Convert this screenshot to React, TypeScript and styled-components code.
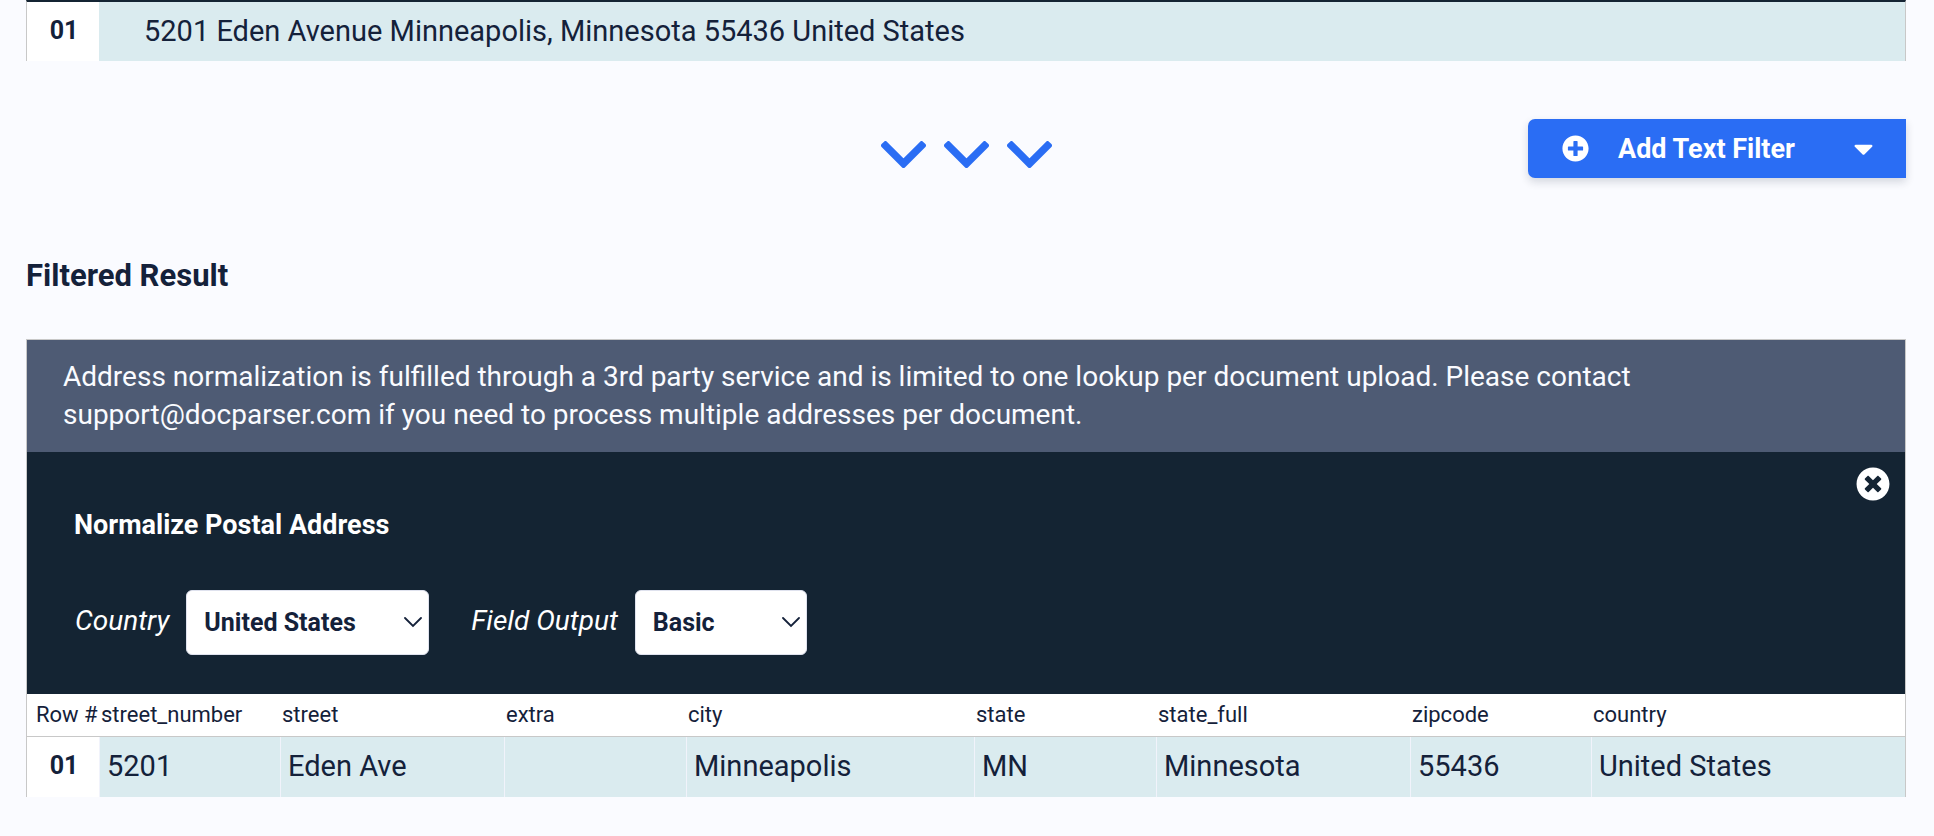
import React from 'react';
import styled, { createGlobalStyle } from 'styled-components';
import { FaCaretDown, FaPlusCircle, FaTimesCircle } from 'react-icons/fa';

const color = {
  page: '#fafbff',
  ink: '#14213a',
  navy: '#142433',
  slate: '#4e5b74',
  blue: '#2a6df4',
  cell: '#daebef',
  line: '#c8c8c8',
  divider: '#f1f3fb',
};

const GlobalStyle = createGlobalStyle`
  *, *::before, *::after { box-sizing: border-box; }
  body {
    margin: 0;
    background: ${color.page};
    color: ${color.ink};
    font-family: Roboto, "Liberation Sans", sans-serif;
  }
`;

const Page = styled.main`
  padding: 0 28px 39px 26px;
`;

const Panel = styled.section<{ $capped?: boolean }>`
  border: 1px solid ${color.line};
  border-bottom: 0;
  ${({ $capped }) => $capped && `border-top: 2px solid ${color.navy};`}
`;

const DataTable = styled.table`
  width: 100%;
  table-layout: fixed;
  border-collapse: separate;
  border-spacing: 0;
  background: #fff;
`;

const Col = styled.col<{ $width?: number }>`
  width: ${({ $width }) => ($width ? `${$width}px` : 'auto')};
`;

const HeadCell = styled.th<{ $first?: boolean }>`
  height: 43px;
  padding: 0 0 0 ${({ $first }) => ($first ? 9 : 2)}px;
  border-bottom: 1px solid ${color.line};
  font-size: 22px;
  font-weight: 400;
  line-height: 26px;
  text-align: left;
  white-space: nowrap;
`;

const RowNumber = styled.th`
  padding: 0 0 2px 2px;
  font-size: 25px;
  font-weight: 700;
  line-height: 30px;
  text-align: center;
`;

const Cell = styled.td`
  height: 60px;
  padding: 0 7px 2px;
  border-left: 1px solid ${color.divider};
  background: ${color.cell};
  font-size: 29px;
  line-height: 34px;
`;

const WideCell = styled(Cell)`
  height: 59px;
  padding: 0 45px 2px;
  border-left: 0;
`;

const FilterBar = styled.div`
  display: grid;
  grid-template-columns: 1fr auto 1fr;
  margin-top: 58px;
`;

const Chevrons = styled.div`
  grid-column: 2;
  display: flex;
  gap: 18px;
  padding-top: 22px;
`;

const AddFilterButton = styled.button`
  grid-column: 3;
  justify-self: end;
  display: flex;
  align-items: center;
  width: 378px;
  height: 59px;
  padding: 0 27px 0 34px;
  border: 0;
  border-radius: 7px 0 0 7px;
  background: ${color.blue};
  box-shadow: 0 4px 8px rgba(20, 33, 58, 0.16);
  color: #fff;
  font: 700 27px/32px Roboto, "Liberation Sans", sans-serif;
  cursor: pointer;
`;

const ButtonLabel = styled.span`
  flex: 1;
  padding-left: 29px;
  text-align: left;
`;

const SectionTitle = styled.h2`
  margin: 80px 0 45px;
  font-size: 31px;
  font-weight: 700;
  line-height: 36px;
`;

const Notice = styled.p`
  margin: 0;
  padding: 18px 36px;
  background: ${color.slate};
  color: ${color.page};
  font-size: 28px;
  line-height: 38px;
`;

const FilterCard = styled.div`
  position: relative;
  padding: 57px 47px 39px;
  background: ${color.navy};
  color: #fff;
`;

const CardTitle = styled.h3`
  margin: 0 0 49px;
  font-size: 27px;
  font-weight: 700;
  line-height: 32px;
`;

const CloseButton = styled.button`
  position: absolute;
  top: 15px;
  right: 15px;
  display: flex;
  padding: 0;
  border: 0;
  background: none;
  color: #fff;
  cursor: pointer;
`;

const Fields = styled.form`
  display: flex;
  flex-wrap: wrap;
  gap: 42px;
  padding-left: 1px;
`;

const Field = styled.div`
  display: flex;
  align-items: center;
  gap: 17px;
`;

const FieldLabel = styled.label`
  padding-bottom: 4px;
  font-size: 28px;
  font-style: italic;
  line-height: 34px;
`;

const SelectBox = styled.div<{ $width: number }>`
  position: relative;
  width: ${({ $width }) => $width}px;
`;

const Select = styled.select`
  appearance: none;
  display: block;
  width: 100%;
  height: 65px;
  padding: 0 36px 0 17px;
  border: 1px solid #dfe2ee;
  border-radius: 6px;
  background: #fff;
  color: ${color.ink};
  font: 700 25px/30px Roboto, "Liberation Sans", sans-serif;
`;

const SelectArrow = styled.svg`
  position: absolute;
  top: 27px;
  right: 7px;
  pointer-events: none;
`;

const Chevron = () => (
  <svg width="45" height="28" viewBox="0 0 45 28" aria-hidden="true">
    <path
      d="M22.5 20.1 L40.55 2.05 L43 4.5 L22.5 25 L2 4.5 L4.45 2.05 Z"
      fill={color.blue}
      stroke={color.blue}
      strokeWidth="4"
      strokeLinejoin="round"
    />
  </svg>
);

type SelectFieldProps = { id: string; label: string; width: number; options: string[] };

const SelectField = ({ id, label, width, options }: SelectFieldProps) => (
  <Field>
    <FieldLabel htmlFor={id}>{label}</FieldLabel>
    <SelectBox $width={width}>
      <Select id={id} defaultValue={options[0]}>
        {options.map((option) => (
          <option key={option}>{option}</option>
        ))}
      </Select>
      <SelectArrow width="18" height="11" viewBox="0 0 18 11" aria-hidden="true">
        <path d="M1 1 L9 9 L17 1" fill="none" stroke={color.ink} strokeWidth="1.8" strokeLinecap="round" />
      </SelectArrow>
    </SelectBox>
  </Field>
);

const columns: { name: string; width?: number; value: string }[] = [
  { name: 'street_number', width: 181, value: '5201' },
  { name: 'street', width: 224, value: 'Eden Ave' },
  { name: 'extra', width: 182, value: '' },
  { name: 'city', width: 288, value: 'Minneapolis' },
  { name: 'state', width: 182, value: 'MN' },
  { name: 'state_full', width: 254, value: 'Minnesota' },
  { name: 'zipcode', width: 181, value: '55436' },
  { name: 'country', value: 'United States' },
];

export default function App() {
  return (
    <>
      <GlobalStyle />
      <Page>
        <Panel $capped>
          <DataTable>
            <colgroup>
              <Col $width={72} />
              <Col />
            </colgroup>
            <tbody>
              <tr>
                <RowNumber scope="row">01</RowNumber>
                <WideCell>5201 Eden Avenue Minneapolis, Minnesota 55436 United States</WideCell>
              </tr>
            </tbody>
          </DataTable>
        </Panel>

        <FilterBar>
          <Chevrons>
            <Chevron />
            <Chevron />
            <Chevron />
          </Chevrons>
          <AddFilterButton type="button">
            <FaPlusCircle size={27} />
            <ButtonLabel>Add Text Filter</ButtonLabel>
            <FaCaretDown size={31} />
          </AddFilterButton>
        </FilterBar>

        <SectionTitle>Filtered Result</SectionTitle>

        <Panel>
          <Notice>
            Address normalization is fulfilled through a 3rd party service and is limited to one lookup per document
            upload. Please contact support@docparser.com if you need to process multiple addresses per document.
          </Notice>
          <FilterCard>
            <CardTitle>Normalize Postal Address</CardTitle>
            <CloseButton type="button" aria-label="Remove filter">
              <FaTimesCircle size={34} />
            </CloseButton>
            <Fields>
              <SelectField id="country" label="Country" width={243} options={['United States']} />
              <SelectField id="field-output" label="Field Output" width={172} options={['Basic']} />
            </Fields>
          </FilterCard>
          <DataTable>
            <colgroup>
              <Col $width={72} />
              {columns.map(({ name, width }) => (
                <Col key={name} $width={width} />
              ))}
            </colgroup>
            <thead>
              <tr>
                <HeadCell scope="col" $first>
                  Row #
                </HeadCell>
                {columns.map(({ name }) => (
                  <HeadCell key={name} scope="col">
                    {name}
                  </HeadCell>
                ))}
              </tr>
            </thead>
            <tbody>
              <tr>
                <RowNumber scope="row">01</RowNumber>
                {columns.map(({ name, value }) => (
                  <Cell key={name}>{value}</Cell>
                ))}
              </tr>
            </tbody>
          </DataTable>
        </Panel>
      </Page>
    </>
  );
}
